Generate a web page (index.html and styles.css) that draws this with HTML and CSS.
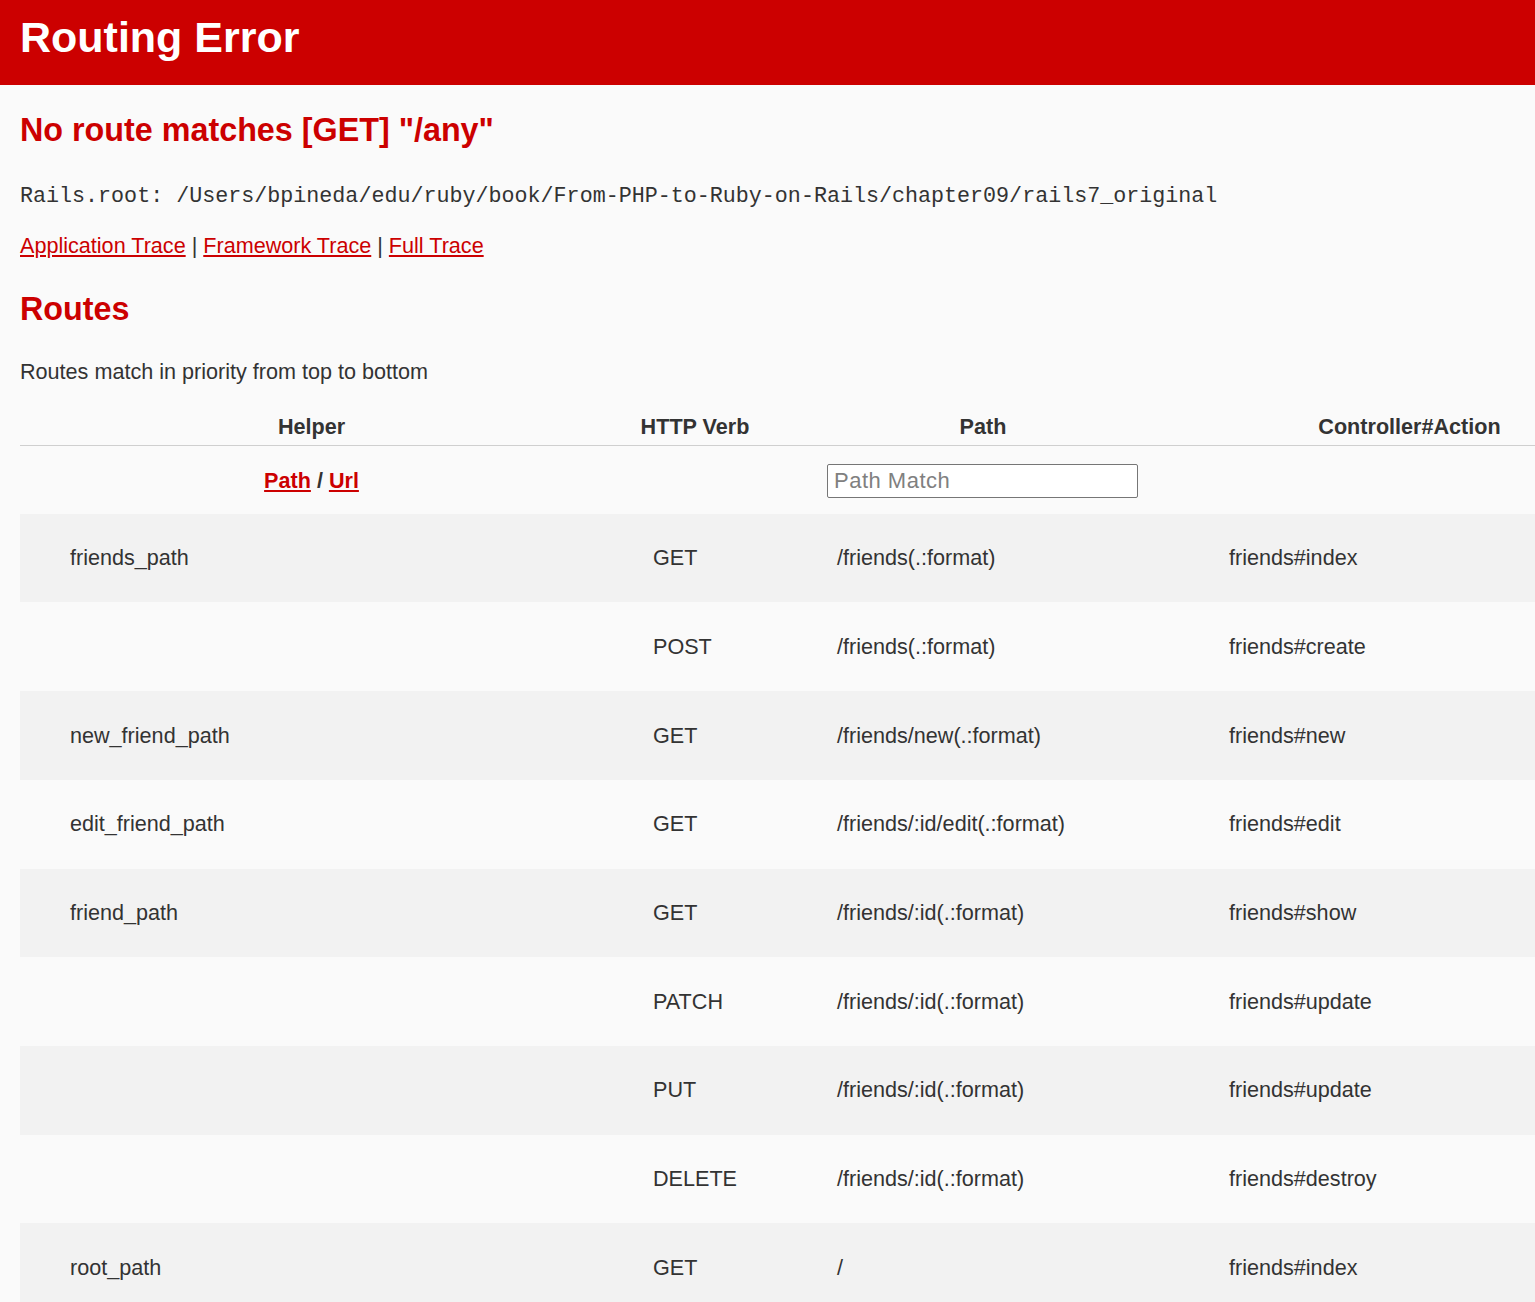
FILE: index.html
```html
<!DOCTYPE html>
<html lang="en">
<head>
<meta charset="utf-8">
<title>Action Controller: Exception caught</title>
<link rel="stylesheet" href="styles.css">
</head>
<body>
<header class="topbar">
  <h1 class="title">Routing Error</h1>
</header>
<main class="container">
  <h2 class="error-title">No route matches [GET] "/any"</h2>
  <p class="rails-root"><code class="mono">Rails.root: /Users/bpineda/edu/ruby/book/From-PHP-to-Ruby-on-Rails/chapter09/rails7_original</code></p>
  <p class="traces"><a class="link" href="#">Application Trace</a> | <a class="link" href="#">Framework Trace</a> | <a class="link" href="#">Full Trace</a></p>
  <h2 class="section-title">Routes</h2>
  <p class="intro">Routes match in priority from top to bottom</p>
  <table class="route-table">
    <colgroup>
      <col class="col-helper">
      <col class="col-verb">
      <col class="col-path">
      <col class="col-action">
    </colgroup>
    <thead>
      <tr>
        <th class="head">Helper</th>
        <th class="head">HTTP Verb</th>
        <th class="head">Path</th>
        <th class="head head-action">Controller#Action</th>
      </tr>
    </thead>
    <tbody>
      <tr class="filter-row">
        <td class="filter-helper"><a class="link strong" href="#">Path</a> / <a class="link strong" href="#">Url</a></td>
        <td></td>
        <td class="filter-path"><input class="search" type="search" placeholder="Path Match"></td>
        <td></td>
      </tr>
      <tr class="route odd"><td class="cell">friends_path</td><td class="cell">GET</td><td class="cell">/friends(.:format)</td><td class="cell">friends#index</td></tr>
      <tr class="route"><td class="cell"></td><td class="cell">POST</td><td class="cell">/friends(.:format)</td><td class="cell">friends#create</td></tr>
      <tr class="route odd"><td class="cell">new_friend_path</td><td class="cell">GET</td><td class="cell">/friends/new(.:format)</td><td class="cell">friends#new</td></tr>
      <tr class="route"><td class="cell">edit_friend_path</td><td class="cell">GET</td><td class="cell">/friends/:id/edit(.:format)</td><td class="cell">friends#edit</td></tr>
      <tr class="route odd"><td class="cell">friend_path</td><td class="cell">GET</td><td class="cell">/friends/:id(.:format)</td><td class="cell">friends#show</td></tr>
      <tr class="route"><td class="cell"></td><td class="cell">PATCH</td><td class="cell">/friends/:id(.:format)</td><td class="cell">friends#update</td></tr>
      <tr class="route odd"><td class="cell"></td><td class="cell">PUT</td><td class="cell">/friends/:id(.:format)</td><td class="cell">friends#update</td></tr>
      <tr class="route"><td class="cell"></td><td class="cell">DELETE</td><td class="cell">/friends/:id(.:format)</td><td class="cell">friends#destroy</td></tr>
      <tr class="route odd"><td class="cell">root_path</td><td class="cell">GET</td><td class="cell">/</td><td class="cell">friends#index</td></tr>
    </tbody>
  </table>
</main>
</body>
</html>
```
FILE: styles.css
```css
html, body {
  margin: 0;
  padding: 0;
  overflow: hidden;
}

body {
  background: #fafafa;
  color: #333;
  font-family: "Liberation Sans", Arial, Helvetica, sans-serif;
  font-size: 21.6px;
  line-height: 30px;
}

.topbar {
  background: #cc0000;
  padding: 16px 20px 26px;
}

.title {
  margin: 0;
  color: #fff;
  font-size: 43px;
  line-height: 43px;
  font-weight: bold;
}

.container {
  padding: 0 0 0 20px;
}

.error-title,
.section-title {
  color: #cc0000;
  font-size: 32.3px;
  line-height: 38px;
  font-weight: bold;
  margin: 0;
}

.error-title {
  margin-top: 26px;
}

.rails-root {
  margin: 31px 0 0;
}

.mono {
  font-family: "Liberation Mono", "DejaVu Sans Mono", monospace;
  font-size: 21.7px;
  color: #333;
}

.traces {
  margin: 19.3px 0 0;
}

.link {
  color: #cc0000;
  text-decoration: underline;
  text-underline-offset: 2px;
}

.strong {
  font-weight: bold;
}

.section-title {
  margin-top: 29.2px;
}

.intro {
  margin: 28.8px 0 0;
}

.route-table {
  margin-top: 25px;
  border-collapse: collapse;
  table-layout: fixed;
  width: 1515px;
}

.col-helper { width: 583px; }
.col-verb { width: 184px; }
.col-path { width: 392px; }
.col-action { width: 356px; }

.head {
  font-weight: bold;
  text-align: center;
  padding: 0 0 3px;
  border-bottom: 1px solid #cfcfcf;
  color: #333;
  white-space: nowrap;
}

.head-action {
  padding-left: 105px;
}

.filter-row {
  height: 68px;
}

.filter-row td {
  padding: 1px 0 0;
  vertical-align: middle;
}

.filter-helper {
  text-align: center;
  font-weight: bold;
}

.filter-path {
  padding-left: 40px !important;
}

.search {
  box-sizing: border-box;
  width: 311px;
  height: 34px;
  margin: 0;
  display: block;
  border: 1px solid #767676;
  border-radius: 2px;
  background: #fff;
  padding: 0 6px;
  font-family: "Liberation Sans", Arial, sans-serif;
  font-size: 22px;
  letter-spacing: 0.5px;
  color: #333;
}

.search::placeholder {
  color: #808080;
}

.route {
  height: 88.7px;
}

.route.odd {
  background: #f2f2f2;
}

.cell {
  padding: 0 0 0 50px;
  vertical-align: middle;
  white-space: nowrap;
  color: #333;
}
```
